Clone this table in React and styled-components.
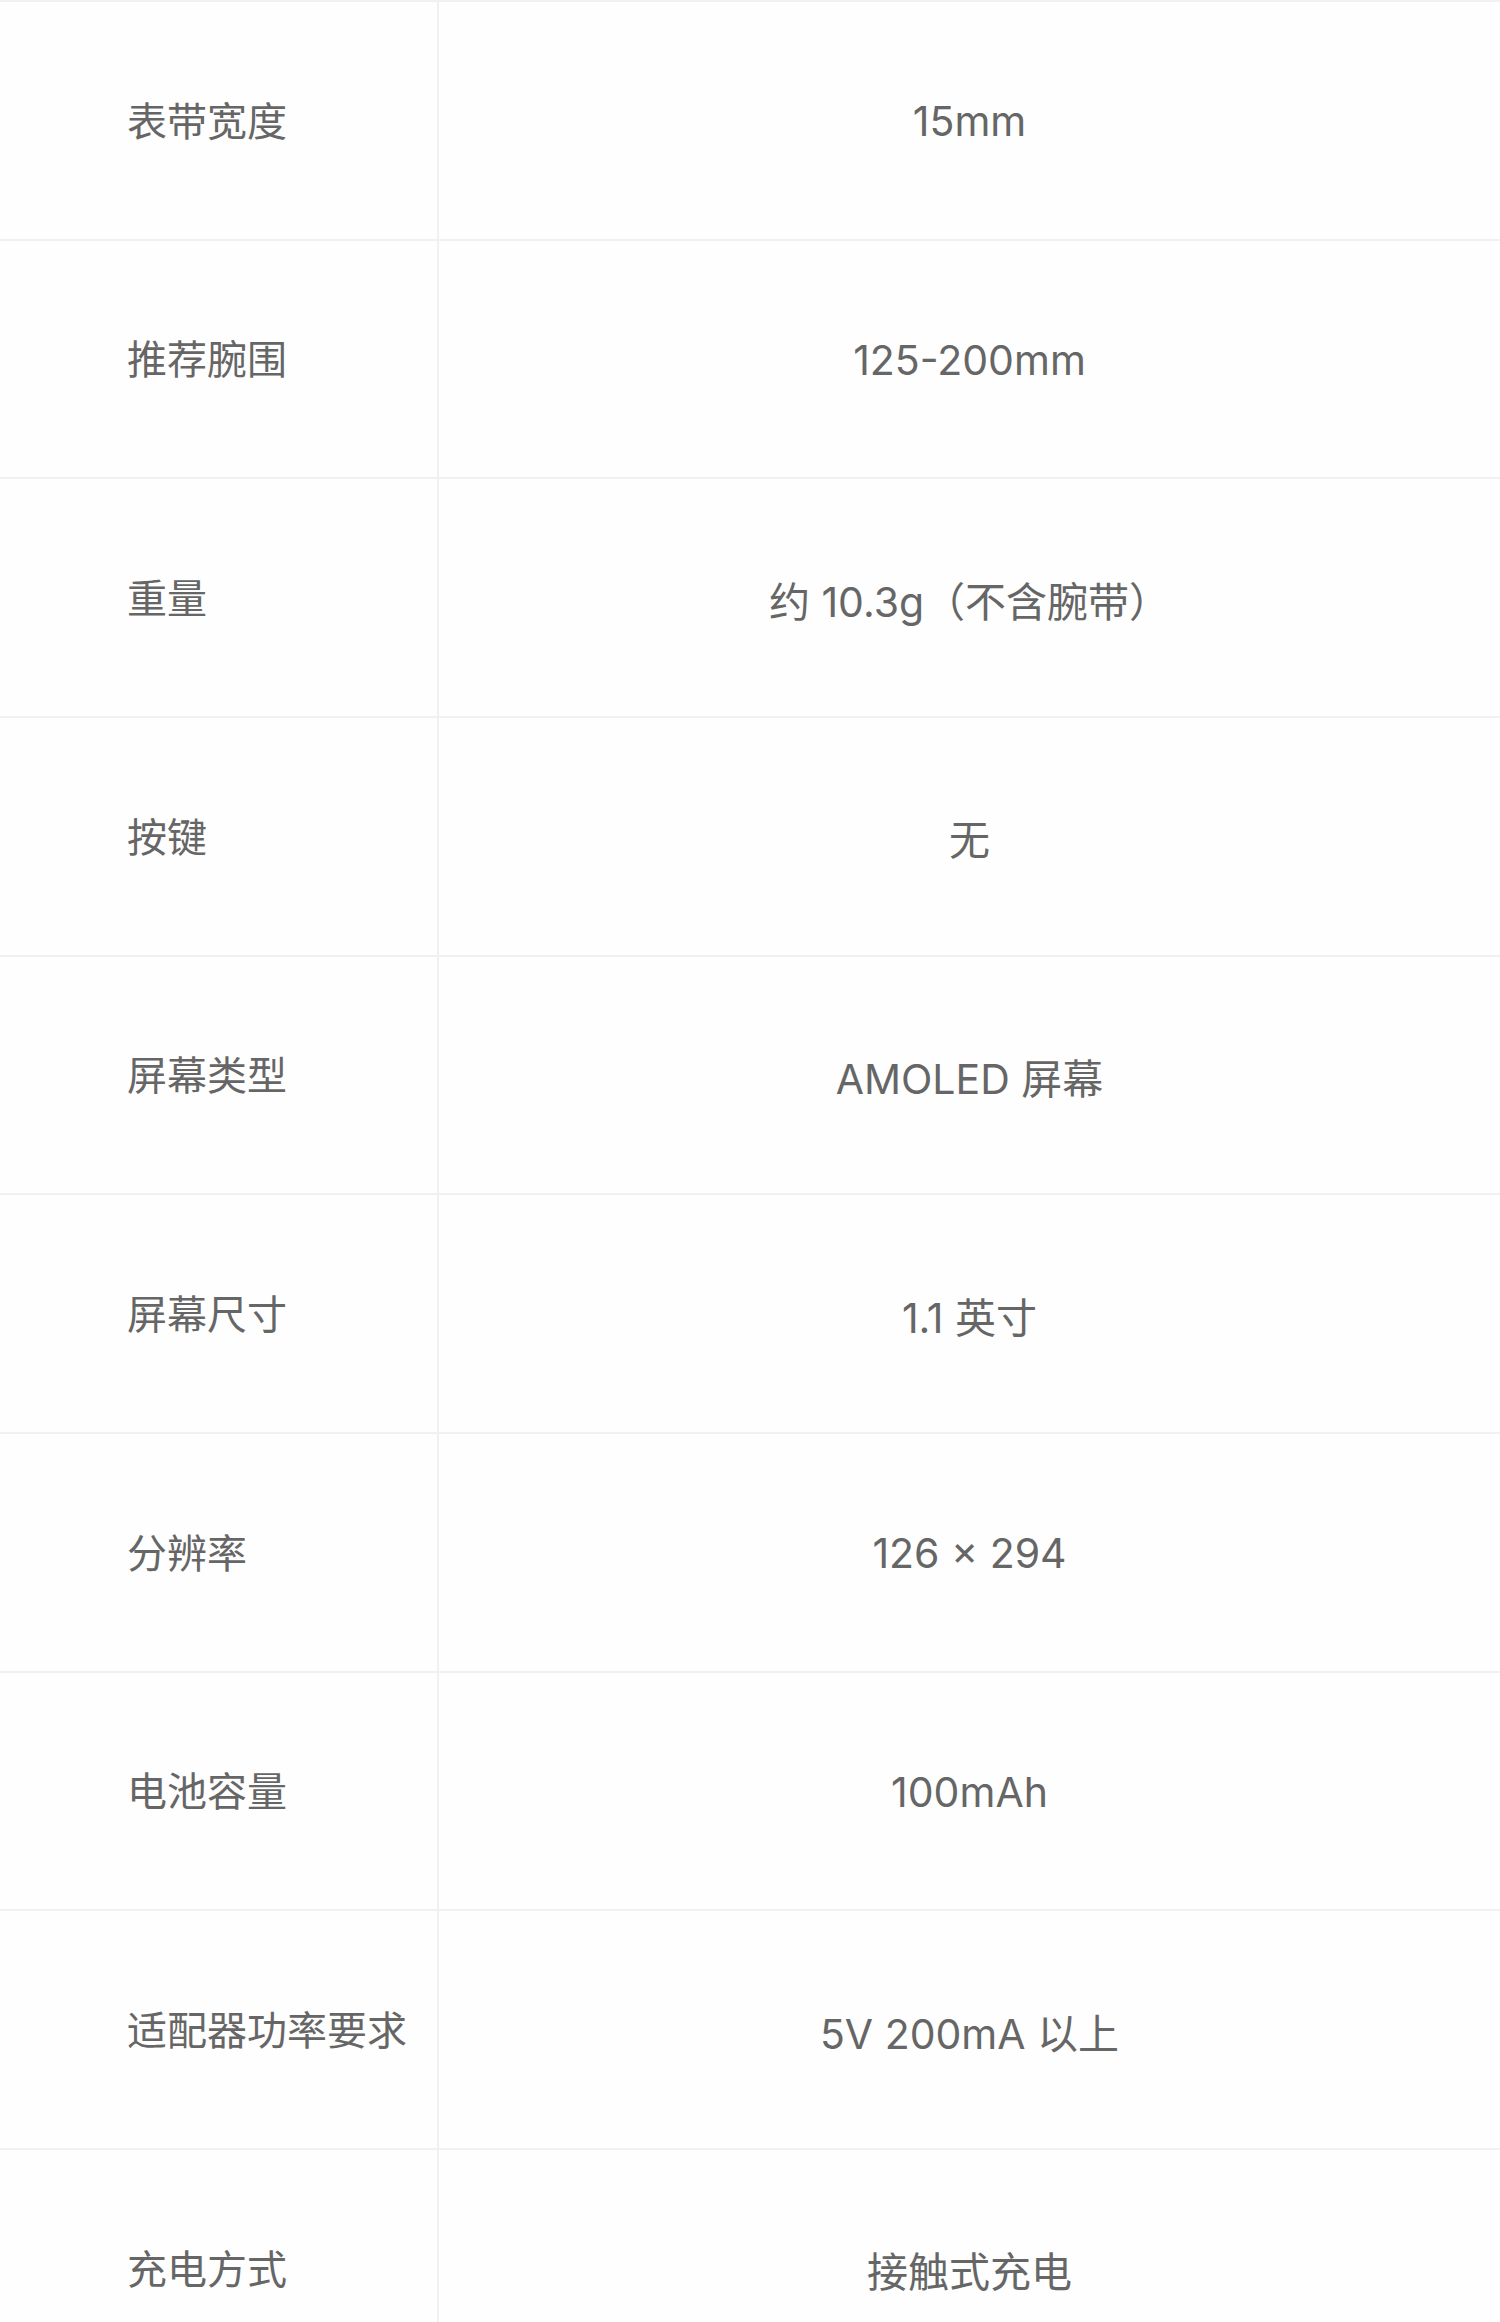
import React from "react";
import styled, { createGlobalStyle } from "styled-components";

const GlobalStyle = createGlobalStyle`
  html, body { margin: 0; padding: 0; background: #ffffff; }
  body { font-family: "Noto Sans CJK SC", "Noto Sans", sans-serif; }
`;

const Table = styled.div`
  width: 1500px;
  display: flex;
  flex-direction: column;
  background: #fefefe;
`;

const Row = styled.div`
  display: grid;
  grid-template-columns: 439px 1fr;
  height: 238.67px;
  box-sizing: border-box;
  border-top: 2px solid #f1f1f1;
`;

const Label = styled.div`
  display: flex;
  align-items: center;
  padding-left: 127px;
  padding-bottom: 3px;
  border-right: 2px solid #f1f1f1;
  font-size: 40px;
  color: #666666;
  font-family: "Noto Sans CJK SC", sans-serif;
`;

const Value = styled.div`
  display: flex;
  align-items: center;
  justify-content: center;
  padding-top: 2px;
  font-size: 41px;
  color: #666666;
  font-family: Inter, "Noto Sans CJK SC", sans-serif;
`;

const specs = [
  ["表带宽度", "15mm"],
  ["推荐腕围", "125-200mm"],
  ["重量", "约 10.3g（不含腕带）"],
  ["按键", "无"],
  ["屏幕类型", "AMOLED 屏幕"],
  ["屏幕尺寸", "1.1 英寸"],
  ["分辨率", "126 × 294"],
  ["电池容量", "100mAh"],
  ["适配器功率要求", "5V 200mA 以上"],
  ["充电方式", "接触式充电"],
];

export default function App() {
  return (
    <>
      <GlobalStyle />
      <Table>
        {specs.map(([k, v]) => (
          <Row key={k}>
            <Label>{k}</Label>
            <Value>{v}</Value>
          </Row>
        ))}
      </Table>
    </>
  );
}
